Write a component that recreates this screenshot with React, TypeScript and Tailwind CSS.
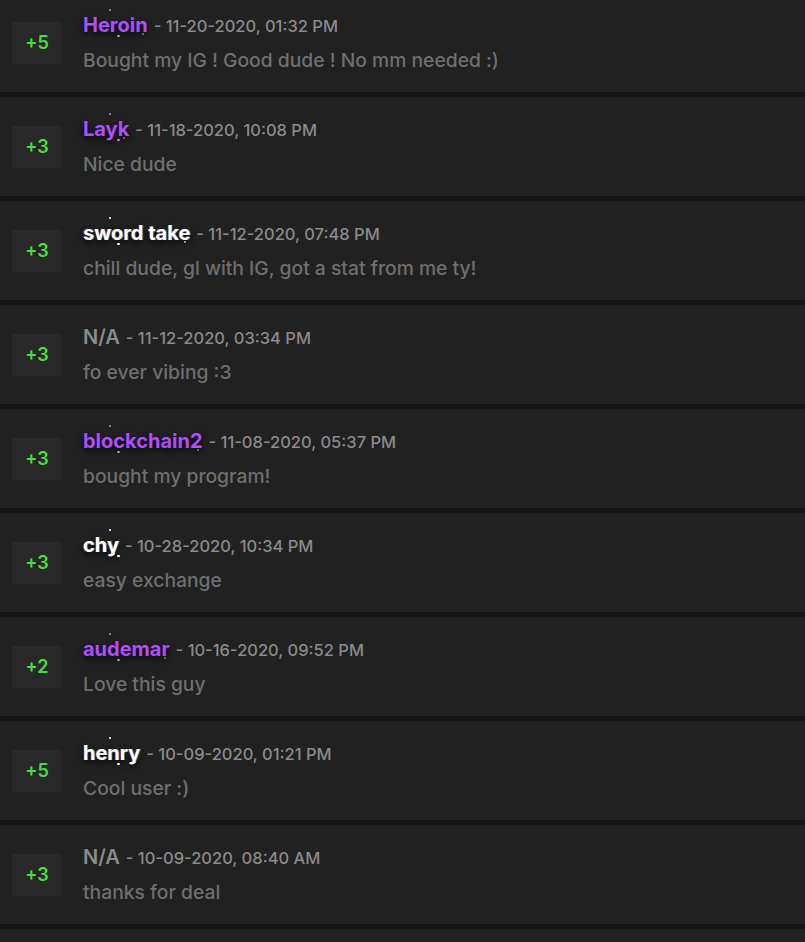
import React from 'react';

type Rep = {
  points: number;
  name: string;
  kind: 'purple' | 'white' | 'none';
  date: string;
  message: string;
};

const reps: Rep[] = [
  { points: 5, name: 'Heroin', kind: 'purple', date: '11-20-2020, 01:32 PM', message: 'Bought my IG ! Good dude ! No mm needed :)' },
  { points: 3, name: 'Layk', kind: 'purple', date: '11-18-2020, 10:08 PM', message: 'Nice dude' },
  { points: 3, name: 'sword take', kind: 'white', date: '11-12-2020, 07:48 PM', message: 'chill dude, gl with IG, got a stat from me ty!' },
  { points: 3, name: 'N/A', kind: 'none', date: '11-12-2020, 03:34 PM', message: 'fo ever vibing :3' },
  { points: 3, name: 'blockchain2', kind: 'purple', date: '11-08-2020, 05:37 PM', message: 'bought my program!' },
  { points: 3, name: 'chy', kind: 'white', date: '10-28-2020, 10:34 PM', message: 'easy exchange' },
  { points: 2, name: 'audemar', kind: 'purple', date: '10-16-2020, 09:52 PM', message: 'Love this guy' },
  { points: 5, name: 'henry', kind: 'white', date: '10-09-2020, 01:21 PM', message: 'Cool user :)' },
  { points: 3, name: 'N/A', kind: 'none', date: '10-09-2020, 08:40 AM', message: 'thanks for deal' },
];

const Sparkles = ({ purple }: { purple: boolean }) => {
  const dot = purple ? 'bg-[#c77dff]' : 'bg-white';
  return (
    <>
      <span className={`absolute left-[26px] -top-[3px] w-[2px] h-[2px] rounded-full ${dot}`} />
      <span className={`absolute left-[34px] bottom-[1px] w-[3px] h-[2px] rounded-full ${dot}`} />
      <span className={`absolute right-[4px] bottom-[3px] w-[2px] h-[2px] rounded-full ${dot} opacity-70`} />
    </>
  );
};

const Name = ({ rep }: { rep: Rep }) => {
  if (rep.kind === 'none') {
    return <span className="text-[20px] font-semibold text-[#8a8a8a]">{rep.name}</span>;
  }
  const purple = rep.kind === 'purple';
  return (
    <span
      className={
        purple
          ? 'relative text-[20px] font-bold text-[#b14dff] [text-shadow:0_3px_6px_rgba(0,0,0,0.9)]'
          : 'relative text-[20px] font-bold text-white [text-shadow:-1px_0_rgba(255,60,60,0.35),1px_0_rgba(60,200,255,0.45),0_3px_6px_rgba(0,0,0,0.9)]'
      }
    >
      {rep.name}
      <Sparkles purple={purple} />
    </span>
  );
};

const RepRow = ({ rep }: { rep: Rep }) => {
  return (
    <div className="flex items-center h-[99px] bg-[#212121] pl-3 gap-[21px]">
      <div className="flex items-center justify-center w-[50px] h-[42px] bg-[#282828] text-[#46e03c] text-[18px] font-semibold">
        +{rep.points}
      </div>
      <div className="flex flex-col gap-[8px]">
        <div className="flex items-baseline gap-[6px] leading-[26px]">
          <Name rep={rep} />
          <span className="text-[16.5px] font-medium text-[#8b8b8b]">- {rep.date}</span>
        </div>
        <div className="text-[19.3px] font-medium leading-[26px] text-[#6f6f6f]">{rep.message}</div>
      </div>
    </div>
  );
};

const App = () => {
  return (
    <div className="w-[805px] h-[942px] overflow-hidden bg-[#141414] font-['Inter',sans-serif]">
      <div className="flex flex-col gap-[5px] -mt-[7px]">
        {reps.map((rep, i) => (
          <RepRow key={i} rep={rep} />
        ))}
        <div className="h-[99px] bg-[#212121]" />
      </div>
    </div>
  );
};

export default App;
